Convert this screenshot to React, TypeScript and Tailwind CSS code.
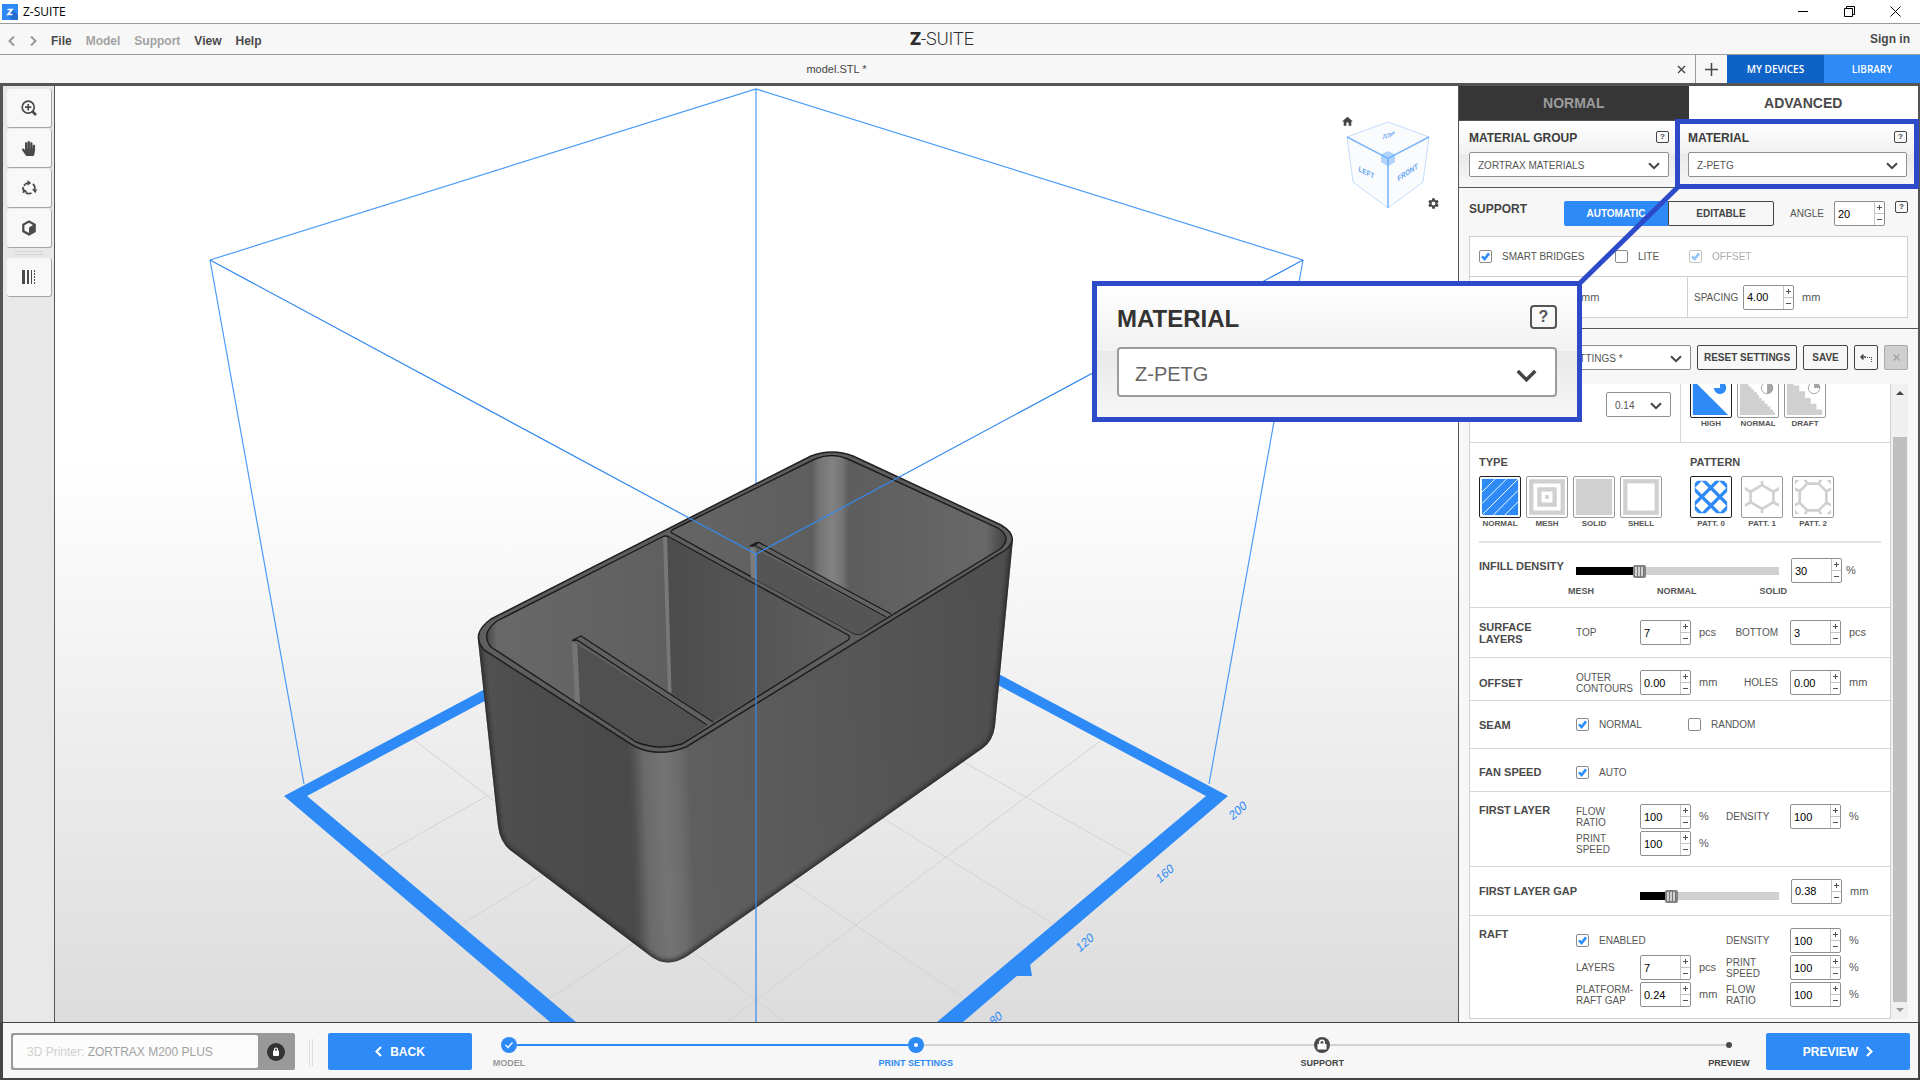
import React from "react";
import { FaHandPaper } from "react-icons/fa";
import { MdHome, MdSettings } from "react-icons/md";

interface SpinProps {
  label: string;
  value: string;
}

const Chevron = ({ className }: { className: string }) => (
  <svg viewBox="0 0 12 8" fill="none" stroke="#444" strokeWidth="2" className={className}>
    <path d="M1 1.2 6 6.2 11 1.2" />
  </svg>
);

const Spin = ({ label, value }: SpinProps) => (
  <span className="flex h-[25px] w-[51px] shrink-0 rounded-xs border border-[#8f8f8f] bg-white">
    <input
      aria-label={label}
      defaultValue={value}
      className="w-[39px] min-w-0 pt-px pl-[3px] text-[11px] text-black outline-none"
    />
    <span className="flex w-2.5 flex-col border-l border-[#c4c4c4]">
      <button aria-label={`Increase ${label}`} className="flex flex-1 items-center justify-center border-b border-[#c4c4c4]">
        <svg width="5" height="5" stroke="#555" className="block">
          <path d="M0 2.5H5M2.5 0V5" />
        </svg>
      </button>
      <button aria-label={`Decrease ${label}`} className="flex flex-1 items-center justify-center">
        <svg width="5" height="5" stroke="#555" className="block">
          <path d="M0 2.5H5" />
        </svg>
      </button>
    </span>
  </span>
);

interface CheckProps {
  label: string;
  checked?: boolean;
  disabled?: boolean;
  className?: string;
}

const Check = ({ label, checked, disabled, className = "" }: CheckProps) => (
  <label className={`flex items-center gap-2.5 text-[10px] ${disabled ? "opacity-50" : ""} ${className}`}>
    <span className="relative block size-[13px] shrink-0">
      <input
        type="checkbox"
        defaultChecked={checked}
        disabled={disabled}
        className="peer block size-[13px] appearance-none rounded-xs border border-[#8a8a8a] bg-white"
      />
      <svg
        viewBox="0 0 13 13"
        fill="none"
        stroke="#2d8af7"
        strokeWidth="2.6"
        className="pointer-events-none absolute inset-0 hidden peer-checked:block"
      >
        <path d="M3 6.4 5.6 9 10 3.4" />
      </svg>
    </span>
    {label}
  </label>
);

const Help = () => (
  <button className="flex h-3 w-[13px] items-center justify-center rounded-xs border border-[#444] text-[8px] leading-none font-bold text-[#444]">
    ?
  </button>
);

interface SelectProps {
  label: string;
  value: string;
  className?: string;
}

const Select = ({ label, value, className = "pl-2" }: SelectProps) => (
  <span className="relative block w-full">
    <select
      aria-label={label}
      className={`block h-[25px] w-full appearance-none rounded-xs border border-[#8f8f8f] bg-white pt-px text-[10px] font-normal text-[#555] ${className}`}
    >
      <option>{value}</option>
    </select>
    <Chevron className="pointer-events-none absolute top-[10px] right-[9px] h-2 w-3" />
  </span>
);

interface SliderProps {
  label: string;
  value: number;
}

const Slider = ({ label, value }: SliderProps) => (
  <input
    type="range"
    aria-label={label}
    defaultValue={value}
    style={{ backgroundImage: `linear-gradient(to right, #000 ${value}%, #d0d0d0 ${value}%)` }}
    className="block h-2 w-full appearance-none [&::-webkit-slider-thumb]:h-[13px] [&::-webkit-slider-thumb]:w-[13px] [&::-webkit-slider-thumb]:appearance-none [&::-webkit-slider-thumb]:rounded-xs [&::-webkit-slider-thumb]:border-2 [&::-webkit-slider-thumb]:border-[#828282] [&::-webkit-slider-thumb]:bg-[repeating-linear-gradient(to_right,#d0d0d0_0_2px,#777_2px_3px)]"
  />
);

interface TileProps {
  label: string;
  active?: boolean;
  children: React.ReactNode;
}

const Tile = ({ label, active, children }: TileProps) => (
  <button className="flex w-[42px] flex-col items-center">
    <svg
      viewBox="0 0 42 42"
      className={`block size-[42px] rounded-xs border bg-white ${active ? "border-[#222] text-[#2d8af7]" : "border-[#9a9a9a] text-[#d0d0d0]"}`}
    >
      {children}
    </svg>
    <span className="text-[8px] leading-3 font-bold whitespace-nowrap">{label}</span>
  </button>
);

const Unit = ({ children }: { children: React.ReactNode }) => (
  <span className="w-[35px] pl-2 text-[11px]">{children}</span>
);

const Sub = ({ children }: { children: React.ReactNode }) => (
  <span className="w-16 text-[10px] leading-[11px] whitespace-pre-line">{children}</span>
);

const SubRight = ({ children }: { children: React.ReactNode }) => (
  <span className="w-16 pr-3 text-right text-[10px]">{children}</span>
);

const Heading = ({ children }: { children: React.ReactNode }) => (
  <h3 className="w-[97px] shrink-0 text-[11px] leading-3 font-bold whitespace-pre-line text-[#4a4a4a]">{children}</h3>
);

const TitleBar = () => (
  <header className="flex h-6 shrink-0 items-center border-b border-[#9b9b9b] bg-white pl-0.5">
    <svg width="16" height="16" className="mr-[5px]">
      <rect width="16" height="16" fill="#2d8af7" />
      <path d="M10 5 16 11V16H10L6 11Z" fill="#226fd0" />
      <path d="M5.5 5.5H10L6 10.5H10.5" fill="none" stroke="#fff" strokeWidth="1.7" />
    </svg>
    <h1 className="flex-1 font-['Open_Sans',sans-serif] text-xs text-black">Z-SUITE</h1>
    <button aria-label="Minimize" className="flex w-[46px] justify-center">
      <svg width="11" height="11" stroke="#000">
        <path d="M0 5.5H10" />
      </svg>
    </button>
    <button aria-label="Restore" className="flex w-[46px] justify-center">
      <svg width="11" height="11" fill="none" stroke="#000">
        <path d="M.5 2.5H8.5V10.5H.5ZM2.5 2.5V.5H10.5V8.5H8.5" />
      </svg>
    </button>
    <button aria-label="Close" className="mr-0.5 flex w-[46px] justify-center">
      <svg width="11" height="11" stroke="#000">
        <path d="M.5.5 10.5 10.5M10.5.5.5 10.5" />
      </svg>
    </button>
  </header>
);

const MenuBar = () => (
  <nav className="grid h-[31px] shrink-0 grid-cols-3 items-center border-b border-[#9b9b9b] bg-[#f7f7f7] text-xs font-bold text-[#4a4a4a]">
    <div className="flex items-center gap-3.5 pt-[3px] pl-2">
      <div className="flex gap-[15px]">
        <button aria-label="Undo">
          <svg width="7" height="10" fill="none" stroke="#999" strokeWidth="2">
            <path d="M6 .5 1.5 5 6 9.5" />
          </svg>
        </button>
        <button aria-label="Redo">
          <svg width="7" height="10" fill="none" stroke="#999" strokeWidth="2">
            <path d="M1 .5 5.5 5 1 9.5" />
          </svg>
        </button>
      </div>
      <button>File</button>
      <button className="text-[#a2a2a2]">Model</button>
      <button className="text-[#a2a2a2]">Support</button>
      <button>View</button>
      <button>Help</button>
    </div>
    <div className="pr-9 text-center font-[Roboto,sans-serif] text-lg leading-6 font-light text-[#2e2e2e]">
      <span className="font-black">Z</span>-SUITE
    </div>
    <a href="#" className="pr-2.5 text-right">
      Sign in
    </a>
  </nav>
);

const TabBar = () => (
  <div className="flex h-7 shrink-0 bg-[#f7f7f7]">
    <div className="flex flex-1 items-center pr-[9px] text-[11px] text-[#444]">
      <span className="flex-1 pr-1 text-center">model.STL *</span>
      <button aria-label="Close tab">
        <svg width="9" height="9" stroke="#444" strokeWidth="1.4">
          <path d="M1 1 8 8M8 1 1 8" />
        </svg>
      </button>
    </div>
    <button aria-label="New tab" className="flex w-8 items-center justify-center border-l border-[#9b9b9b]">
      <svg width="13" height="13" stroke="#444" strokeWidth="1.5">
        <path d="M0 6.5H13M6.5 0V13" />
      </svg>
    </button>
    <button className="w-[97px] bg-[#0f62c6] font-['Open_Sans',sans-serif] text-[10px] font-semibold text-white">MY DEVICES</button>
    <button className="w-24 bg-[#2d8af7] font-['Open_Sans',sans-serif] text-[10px] font-semibold text-white">LIBRARY</button>
  </div>
);

const ToolButton = ({ label, children }: { label: string; children: React.ReactNode }) => (
  <button
    aria-label={label}
    className="flex h-[39px] w-[45px] items-center justify-center rounded-[3px] border-r border-b border-[#a4a4a4] bg-[#f8f8f8] text-[#4a4a4a]"
  >
    {children}
  </button>
);

const Toolbar = () => (
  <aside className="flex w-[52px] shrink-0 flex-col items-center gap-px border-r border-[#555] bg-[#e8e8e8] pt-[3px] pl-px">
    <ToolButton label="Zoom">
      <svg width="16" height="16" viewBox="0 0 16 16" fill="none" stroke="currentColor" strokeWidth="1.7">
        <circle cx="7.2" cy="7.2" r="6" />
        <path d="M4 7.2H10.4M7.2 4V10.4" />
        <path d="M11.5 11.5 15 15" strokeWidth="2.6" />
      </svg>
    </ToolButton>
    <ToolButton label="Pan">
      <FaHandPaper size={15} />
    </ToolButton>
    <ToolButton label="Rotate">
      <svg width="16" height="16" viewBox="0 0 16 16" fill="none" stroke="currentColor" strokeWidth="1.8">
        <path d="M3 5.8A5.6 5.6 0 0 1 7 2.8M12 3.8A5.6 5.6 0 0 1 13.5 9.5M10.5 13A5.6 5.6 0 0 1 4.6 12.5" />
        <path d="M6.5 0V5.8L10.2 2.9ZM10.8 9.2H16L14.5 13.2ZM1.6 13.3 2 8.5 6.4 11.2Z" fill="currentColor" stroke="none" />
        <path d="M2.1 10A6 6 0 0 1 2.3 7" />
      </svg>
    </ToolButton>
    <ToolButton label="View">
      <svg width="16" height="16" viewBox="0 0 16 16">
        <path d="M8 .3 14.8 4.1V11.9L8 15.7 1.2 11.9V4.1Z" fill="currentColor" />
        <path d="M8 2.8 12 5 8 7.6V13L3.4 10.6V5.3Z" fill="#f8f8f8" />
      </svg>
    </ToolButton>
    <div className="my-0.5 h-1 w-7 border-y border-[#d0d4d8]" />
    <ToolButton label="Supports">
      <svg width="14" height="14" stroke="currentColor">
        <path d="M1.5 0V14" strokeWidth="3" />
        <path d="M6 0V14" strokeWidth="2" />
        <path d="M9.5 0V14" />
        <path d="M12.5 0V14" strokeDasharray="2 1" />
      </svg>
    </ToolButton>
  </aside>
);

const ViewCube = () => (
  <div className="absolute top-6 right-3 size-[110px]">
    <svg viewBox="1336 110 110 110" className="block size-full">
      <g fill="#fafbfd" stroke="#c3defc">
        <path d="M1388 122 1429 137 1388 158.500 1347 137Z" />
        <path d="M1347 137 1388 158.500V208L1353 182Z" />
        <path d="M1429 137 1388 158.500V208L1423 182Z" />
      </g>
      <path d="M1347 137 1388 158.500 1429 137M1388 158.500V208" fill="none" stroke="#7fb8fa" strokeWidth="1.5" />
      <path d="M1388 151 1395 154.500V162L1388 166.500 1381 162V154.500Z" fill="#6aaefa" opacity=".5" />
      <g fill="#62a5f3" fontFamily="Liberation Sans, sans-serif" fontSize="7" fontWeight="700" textAnchor="middle">
        <text transform="translate(1366 175) rotate(28) skewX(20)">LEFT</text>
        <text transform="translate(1408 175) rotate(-34) skewX(-26)">FRONT</text>
        <text transform="translate(1387 138) rotate(-16) skewX(-42)" fontSize="6">TOP</text>
      </g>
    </svg>
    <button aria-label="Home view" className="absolute top-[5px] left-[5px] text-[#444]">
      <MdHome size={13} />
    </button>
    <button aria-label="View options" className="absolute right-1.5 bottom-2.5 text-[#444]">
      <MdSettings size={13} />
    </button>
  </div>
);

const Scene = () => (
  <svg viewBox="55 86 1403 936" preserveAspectRatio="xMidYMid slice" className="absolute inset-0 block size-full">
    <defs>
      <linearGradient id="body" gradientUnits="userSpaceOnUse" x1="478" x2="1013" y1="0" y2="0" gradientTransform="translate(-30 0) skewX(2.24)">
        <stop offset="0" stopColor="#535353" />
        <stop offset=".08" stopColor="#4d4d4d" />
        <stop offset=".28" stopColor="#494949" />
        <stop offset=".29" stopColor="#505050" />
        <stop offset=".31" stopColor="#6a6a6a" />
        <stop offset=".345" stopColor="#747474" />
        <stop offset=".375" stopColor="#6c6c6c" />
        <stop offset=".395" stopColor="#5f5f5f" />
        <stop offset=".7" stopColor="#575757" />
        <stop offset="1" stopColor="#4e4e4e" />
      </linearGradient>
      <linearGradient id="back" gradientUnits="userSpaceOnUse" x1="672" x2="1006" y1="0" y2="0">
        <stop offset="0" stopColor="#656565" />
        <stop offset=".42" stopColor="#5e5e5e" />
        <stop offset=".44" stopColor="#747474" />
        <stop offset=".48" stopColor="#828282" />
        <stop offset=".51" stopColor="#747474" />
        <stop offset=".53" stopColor="#5d5d5d" />
        <stop offset=".94" stopColor="#686868" />
        <stop offset="1" stopColor="#424242" />
      </linearGradient>
      <linearGradient id="front" gradientUnits="userSpaceOnUse" x1="486" x2="668" y1="0" y2="0">
        <stop offset="0" stopColor="#444" />
        <stop offset=".06" stopColor="#686868" />
        <stop offset="1" stopColor="#5f5f5f" />
      </linearGradient>
      <linearGradient id="divider" gradientUnits="userSpaceOnUse" x1="668" x2="850" y1="0" y2="0">
        <stop offset="0" stopColor="#4c4c4c" />
        <stop offset="1" stopColor="#5f5f5f" />
      </linearGradient>
      <clipPath id="bodyClip">
        <path d="M478 640 498 826Q500 842 510 850L649 955Q667 970 689 955L983 748Q993 741 995 726L1013 539 850 456 658 600Z" />
      </clipPath>
      <filter id="soft">
        <feGaussianBlur stdDeviation="2" />
      </filter>
    </defs>

    <g fill="none" stroke="#d3d3d3">
      <path d="M1004 688 980 706M1103 739 727 1022M413 739 785 1022M379 857 487 796M462 924 560 864M550 998 660 926" />
      <path d="M1133 857 940 749M1053 924 860 804M964 998 770 868" />
    </g>
    <path d="M284 796 756 545 1228 796 963 1022H937L1206 796 756 556 307 796 576 1022H550Z" fill="#2d8af7" />
    <path d="M1030 964 1032 976H1014Z" fill="#2d8af7" />
    <g fill="#2d8af7" fontFamily="Liberation Sans, sans-serif" fontSize="12" textAnchor="middle">
      <text transform="translate(1240 814) rotate(-42) skewX(-12)">200</text>
      <text transform="translate(1167 877) rotate(-42) skewX(-12)">160</text>
      <text transform="translate(1087 946) rotate(-42) skewX(-12)">120</text>
      <text transform="translate(998 1022) rotate(-42) skewX(-12)">80</text>
    </g>
    <g fill="none" stroke="#4b9bf8" strokeWidth="1.2">
      <path d="M210 260 756 89 1303 260M756 89V500M210 260 304 784M1303 260 1209 784" />
    </g>

    <path
      d="M478 640 498 826Q500 842 510 850L649 955Q667 970 689 955L983 748Q993 741 995 726L1013 539 850 456 658 600Z"
      fill="url(#body)"
    />
    <g clipPath="url(#bodyClip)">
      <path
        d="M478 640 498 826Q500 842 510 850L649 955Q667 970 689 955L983 748Q993 741 995 726L1013 539"
        fill="none"
        stroke="#222"
        strokeWidth="4"
        filter="url(#soft)"
      />
    </g>
    <path
      d="M491 619 811 456Q832 448 853 456L1001 525Q1022 538 1004 551L686 747Q658 758 634 746L484 650Q470 634 491 619Z"
      fill="#5e5e5e"
      stroke="#1f1f1f"
      strokeWidth="1.5"
    />

    <path
      d="M672 533Q670 531 674 529L815 459Q832 452 848 459L998 528Q1013 538 1000 549L861 634Q857 635 853 633Z"
      fill="url(#back)"
      stroke="#1c1c1c"
      strokeWidth="1.4"
    />
    <path d="M756 546 888 616 861 634Q857 635 853 633L751 577Z" fill="#555" />
    <path d="M750 547H756L757 580 751 577Z" fill="#7c7c7c" />
    <path d="M750 546 759 542 891 614 885 618Z" fill="#636363" />
    <path d="M750 546 753 546 759 542.500M750 546 756 543 759 542.500 891 614M754 545 886 617" fill="none" stroke="#1c1c1c" strokeWidth="1.3" />

    <path
      d="M497 621 662 537Q666 535 669 537L848 635Q851 637 848 640L682 744Q658 751 636 742L491 647Q480 634 497 621Z"
      fill="url(#front)"
    />
    <path d="M667 537 848 635Q851 637 848 640L713 722 671 693Z" fill="url(#divider)" />
    <path d="M663 537H667L671.500 693 668 691Z" fill="#787878" />
    <path d="M577 641 708 725 682 744Q658 751 636 742L580 706Z" fill="#505050" />
    <path d="M572 641H577L580 705 575 702Z" fill="#757575" />
    <path d="M572 641 581 636 713 722 707 726Z" fill="#606060" />
    <path d="M572 640.500 581 636 713 722M572 640.500 577 640 707 725" fill="none" stroke="#1c1c1c" strokeWidth="1.3" />
    <path
      d="M497 621 662 537Q666 535 669 537L848 635Q851 637 848 640L682 744Q658 751 636 742L491 647Q480 634 497 621Z"
      fill="none"
      stroke="#1c1c1c"
      strokeWidth="1.4"
    />

    <path d="M210 260 756 554 1303 260M756 554V1022" fill="none" stroke="#3489ee" strokeWidth="1.2" />
  </svg>
);

const MaterialHeader = () => (
  <section className="flex h-[67px] shrink-0 border-b border-[#555] bg-[linear-gradient(#fff,#f1f1f1_50%,#e9e9e9_50%,#f7f7f7)]">
    <div className="w-[219px] pt-[9px] pr-[9px] pl-2.5">
      <div className="flex h-[22px] items-start justify-between">
        <h2 className="text-xs leading-4 font-bold text-[#3c3c3c]">MATERIAL GROUP</h2>
        <span className="pt-px">
          <Help />
        </span>
      </div>
      <Select label="Material group" value="ZORTRAX MATERIALS" />
    </div>
    <div className="relative flex-1 pt-[9px] pr-[11px] pl-2.5">
      <div className="flex h-[22px] items-start justify-between">
        <h2 className="text-xs leading-4 font-bold text-[#3c3c3c]">MATERIAL</h2>
        <span className="pt-px">
          <Help />
        </span>
      </div>
      <Select label="Material" value="Z-PETG" />
      <div className="pointer-events-none absolute -top-0.5 -right-px -bottom-0.5 -left-[3px] border-[5px] border-[#2d4bc8]" />
    </div>
  </section>
);

const SupportSection = () => (
  <section className="shrink-0 border-b border-[#555] bg-[#f7f7f7] pt-[13px] pr-2.5 pb-2.5 pl-2.5 text-[#555]">
    <div className="flex items-start">
      <h2 className="w-[95px] text-xs leading-4 font-bold text-[#444]">SUPPORT</h2>
      <div className="flex h-[25px] w-[210px] text-[10px] font-bold">
        <button className="flex-1 rounded-l-xs bg-[#2d8af7] text-white">AUTOMATIC</button>
        <button className="flex-1 rounded-r-xs border border-[#444] text-[#444]">EDITABLE</button>
      </div>
      <span className="ml-4 flex h-[25px] w-11 items-center text-[10px]">ANGLE</span>
      <Spin label="Angle" value="20" />
      <span className="ml-auto">
        <Help />
      </span>
    </div>
    <div className="mt-2.5 border border-[#d0d0d0] bg-white">
      <div className="flex h-10 items-center border-b border-[#d0d0d0] pl-[9px]">
        <Check label="SMART BRIDGES" checked className="w-[136px]" />
        <Check label="LITE" className="w-[74px]" />
        <Check label="OFFSET" checked disabled />
      </div>
      <div className="flex h-10">
        <div className="flex w-[218px] items-center border-r border-[#d0d0d0] pl-[111px] text-[11px]">mm</div>
        <div className="flex items-center pl-1.5">
          <span className="w-[49px] text-[10px]">SPACING</span>
          <Spin label="Spacing" value="4.00" />
          <Unit>mm</Unit>
        </div>
      </div>
    </div>
  </section>
);

const SettingsBar = () => (
  <div className="flex shrink-0 items-center gap-1.5 bg-[#f7f7f7] pt-4 pr-2.5 pb-3.5 pl-2.5 text-[10px] font-bold text-[#444]">
    <Select label="Profile" value="SETTINGS *" className="pl-24" />
    <button className="h-[25px] w-[100px] shrink-0 rounded-xs border border-[#444]">RESET SETTINGS</button>
    <button className="h-[25px] w-[45px] shrink-0 rounded-xs border border-[#444]">SAVE</button>
    <button aria-label="Revert" className="flex h-[25px] w-6 shrink-0 items-center justify-center rounded-xs border border-[#444]">
      <svg width="13" height="9" fill="none" stroke="#444">
        <path d="M3.500 1.500 1 4 3.500 6.500M1 4H6" strokeWidth="1.5" />
        <path d="M7 4.500H12M11.500 4V9" strokeDasharray="1 1" />
      </svg>
    </button>
    <button aria-label="Delete" className="flex h-[25px] w-6 shrink-0 items-center justify-center rounded-xs border border-[#aaa] bg-[#cfcfcf]">
      <svg width="7" height="7" stroke="#a5a5a5" strokeWidth="1.5">
        <path d="M.5.5 6.500 6.500M6.500.5.5 6.500" />
      </svg>
    </button>
  </div>
);

const QualityRow = () => (
  <div className="flex h-[59px] border-b border-[#d6d6d6]">
    <div className="w-[211px] border-r border-[#d6d6d6] pt-2 pr-[9px]">
      <div className="ml-auto w-[65px]">
        <Select label="Layer thickness" value="0.14" />
      </div>
    </div>
    <div className="-mt-2 flex gap-[5px] pl-[9px]">
      <Tile label="HIGH" active>
        <path d="M2 3 39 40H2Z" fill="currentColor" />
        <path d="M30.500 11.500V5A6.500 6.500 0 1 1 24 11.500Z" fill="currentColor" />
      </Tile>
      <Tile label="NORMAL">
        <path d="M2 2H7V7H11V10H14V13H17V16H20V19H22V22H25V25H28V28H31V31H34V34H37V37H39V40H2Z" fill="currentColor" />
        <circle cx="30.500" cy="11.500" r="6" fill="#fff" stroke="#a5a5a5" />
        <path d="M30.500 5A6.500 6.500 0 0 1 30.500 18Z" fill="#a5a5a5" />
      </Tile>
      <Tile label="DRAFT">
        <path d="M2 2H9V9H15V15H21V22H27V28H33V34H39V40H2Z" fill="currentColor" />
        <circle cx="30.500" cy="11.500" r="6" fill="#fff" stroke="#a5a5a5" />
        <path d="M30.500 5A6.500 6.500 0 0 1 37 11.500H30.500Z" fill="#a5a5a5" />
      </Tile>
    </div>
  </div>
);

const TypeRow = () => (
  <div className="mr-[9px] ml-[9px] flex border-b-2 border-[#e2e2e2] pt-[13px] pb-[11px]">
    <div className="w-[211px]">
      <h3 className="mb-2 text-[11px] leading-3 font-bold text-[#4a4a4a]">TYPE</h3>
      <div className="flex gap-[5px]">
        <Tile label="NORMAL" active>
          <rect x="2" y="2" width="38" height="38" fill="currentColor" />
          <path d="M2 16 16 2M2 28 28 2M2 40 40 2M14 40 40 14M26 40 40 26" stroke="#fff" />
        </Tile>
        <Tile label="MESH">
          <path d="M4.500 4.500H37.500V37.500H4.500ZM13 13H29V29H13Z" fill="none" stroke="currentColor" strokeWidth="4.500" />
          <rect x="19" y="19" width="4" height="4" fill="currentColor" />
        </Tile>
        <Tile label="SOLID">
          <rect x="2" y="2" width="38" height="38" fill="currentColor" />
        </Tile>
        <Tile label="SHELL">
          <rect x="4.500" y="4.500" width="33" height="33" fill="none" stroke="currentColor" strokeWidth="4.500" />
        </Tile>
      </div>
    </div>
    <div>
      <h3 className="mb-2 text-[11px] leading-3 font-bold text-[#4a4a4a]">PATTERN</h3>
      <div className="flex gap-[9px]">
        <Tile label="PATT. 0" active>
          <svg x="4" y="4" width="34" height="34" viewBox="0 0 34 34">
            <path
              d="M-2 26 26-2M7 36 36 7M-2 7.500 27 36M7.500-2 36 26.500M-1 6 6-1M27 35 35 27M27-1 35 7M-1 27 7 35"
              stroke="currentColor"
              strokeWidth="3.500"
            />
          </svg>
        </Tile>
        <Tile label="PATT. 1">
          <svg x="3" y="4" width="36" height="34" viewBox="0 0 36 34">
            <path
              d="M18 4.500 30 11.500V22.500L18 29.500 6 22.500V11.500ZM18 0V4.500M18 29.500V34M30 11.500 37 7.500M30 22.500 37 26.500M6 11.500-1 7.500M6 22.500-1 26.500"
              fill="none"
              stroke="currentColor"
              strokeWidth="2.800"
            />
          </svg>
        </Tile>
        <Tile label="PATT. 2">
          <svg x="2" y="3" width="38" height="36" viewBox="0 0 38 36">
            <path
              d="M13 4H25L33 12V24L25 32H13L5 24V12ZM13 4 10-1M25 4 28-1M33 12 39 9M33 24 39 27M25 32 28 37M13 32 10 37M5 12-1 9M5 24-1 27"
              fill="none"
              stroke="currentColor"
              strokeWidth="2.800"
            />
            <path d="M0 0H5L0 5ZM38 0H33L38 5ZM0 36H5L0 31ZM38 36H33L38 31Z" fill="currentColor" />
          </svg>
        </Tile>
      </div>
    </div>
  </div>
);

const rowClass = "flex border-b border-[#d6d6d6] pl-[9px]";

const SettingsList = () => (
  <div className="flex min-h-0 flex-1 bg-[#f7f7f7] pr-2.5 pb-[3px] pl-2.5">
    <div className="min-w-0 flex-1 overflow-hidden border-x border-b border-[#d0d0d0] bg-white text-[#555]">
      <QualityRow />
      <TypeRow />

      <div className={`${rowClass} h-[65px] pt-[15px]`}>
        <span className="pt-0.5">
          <Heading>INFILL DENSITY</Heading>
        </span>
        <div className="w-[203px] pt-[9px]">
          <Slider label="Infill density" value={30} />
          <div className="-mx-2 mt-2.5 flex justify-between text-[9px] leading-3 font-bold">
            <span>MESH</span>
            <span>NORMAL</span>
            <span>SOLID</span>
          </div>
        </div>
        <span className="w-3" />
        <Spin label="Infill density value" value="30" />
        <span className="pt-1 pl-1 text-[11px]">%</span>
      </div>

      <div className={`${rowClass} h-[50px] items-center`}>
        <Heading>{"SURFACE\nLAYERS"}</Heading>
        <Sub>TOP</Sub>
        <Spin label="Top layers" value="7" />
        <Unit>pcs</Unit>
        <SubRight>BOTTOM</SubRight>
        <Spin label="Bottom layers" value="3" />
        <Unit>pcs</Unit>
      </div>

      <div className={`${rowClass} h-[43px] items-end pb-[5px]`}>
        <div className="flex items-center">
          <Heading>OFFSET</Heading>
          <Sub>{"OUTER\nCONTOURS"}</Sub>
          <Spin label="Outer contours" value="0.00" />
          <Unit>mm</Unit>
          <SubRight>HOLES</SubRight>
          <Spin label="Holes" value="0.00" />
          <Unit>mm</Unit>
        </div>
      </div>

      <div className={`${rowClass} h-12 items-center`}>
        <Heading>SEAM</Heading>
        <Check label="NORMAL" checked className="w-28" />
        <Check label="RANDOM" />
      </div>

      <div className={`${rowClass} h-[43px] items-center pt-1`}>
        <Heading>FAN SPEED</Heading>
        <Check label="AUTO" checked />
      </div>

      <div className={`${rowClass} h-[75px] pt-3`}>
        <Heading>FIRST LAYER</Heading>
        <div className="flex flex-col gap-0.5">
          <div className="flex items-center">
            <Sub>{"FLOW\nRATIO"}</Sub>
            <Spin label="First layer flow ratio" value="100" />
            <Unit>%</Unit>
            <Sub>DENSITY</Sub>
            <Spin label="First layer density" value="100" />
            <Unit>%</Unit>
          </div>
          <div className="flex items-center">
            <Sub>{"PRINT\nSPEED"}</Sub>
            <Spin label="First layer print speed" value="100" />
            <Unit>%</Unit>
          </div>
        </div>
      </div>

      <div className={`${rowClass} h-[49px] items-center`}>
        <h3 className="w-[161px] text-[11px] leading-3 font-bold text-[#4a4a4a]">FIRST LAYER GAP</h3>
        <div className="w-[139px] pt-2.5">
          <Slider label="First layer gap" value={20} />
        </div>
        <span className="w-3" />
        <Spin label="First layer gap value" value="0.38" />
        <Unit>mm</Unit>
      </div>

      <div className="flex pt-3 pl-[9px]">
        <Heading>RAFT</Heading>
        <div className="flex flex-col gap-0.5">
          <div className="flex items-center">
            <Check label="ENABLED" checked className="w-[150px]" />
            <Sub>DENSITY</Sub>
            <Spin label="Raft density" value="100" />
            <Unit>%</Unit>
          </div>
          <div className="flex items-center">
            <Sub>LAYERS</Sub>
            <Spin label="Raft layers" value="7" />
            <Unit>pcs</Unit>
            <Sub>{"PRINT\nSPEED"}</Sub>
            <Spin label="Raft print speed" value="100" />
            <Unit>%</Unit>
          </div>
          <div className="flex items-center">
            <Sub>{"PLATFORM-\nRAFT GAP"}</Sub>
            <Spin label="Platform-raft gap" value="0.24" />
            <Unit>mm</Unit>
            <Sub>{"FLOW\nRATIO"}</Sub>
            <Spin label="Raft flow ratio" value="100" />
            <Unit>%</Unit>
          </div>
        </div>
      </div>
    </div>
    <div className="flex w-[17px] flex-col items-center bg-[#f0f0f0] pr-px pl-0.5">
      <svg width="8" height="20" className="block shrink-0">
        <path d="M0 11 4 7 8 11Z" fill="#444" />
      </svg>
      <div className="mt-[33px] w-full flex-1 bg-[#bfbfbf]" />
      <svg width="8" height="17" className="block shrink-0">
        <path d="M0 6H8L4 10Z" fill="#999" />
      </svg>
    </div>
  </div>
);

const SettingsPanel = () => (
  <aside className="flex w-[462px] shrink-0 flex-col border-r-2 border-l border-[#555]">
    <div className="flex h-[35px] shrink-0 border-b border-[#555] text-sm font-bold">
      <button className="flex-1 bg-[#363636] text-[#9c9c9c]">NORMAL</button>
      <button className="flex-1 bg-white text-[#4a4a4a]">ADVANCED</button>
    </div>
    <MaterialHeader />
    <SupportSection />
    <SettingsBar />
    <SettingsList />
  </aside>
);

const Callout = () => (
  <>
    <svg width="106" height="104" className="absolute top-[98px] right-[238px]">
      <path d="M102 3 4 99" stroke="#2d4bc8" strokeWidth="5" />
    </svg>
    <div className="absolute top-[195px] right-[338px] w-[490px] border-[5px] border-[#2d4bc8] bg-[linear-gradient(#fff,#f1f1f1_50%,#e9e9e9_50%,#f6f6f6)] px-5 pt-[19px] pb-5">
      <div className="flex h-[42px] justify-between">
        <h2 className="text-2xl leading-7 font-bold text-[#333]">MATERIAL</h2>
        <button className="flex h-6 w-[27px] items-center justify-center rounded-sm border-2 border-[#555] text-base leading-none font-bold text-[#555]">
          ?
        </button>
      </div>
      <div className="relative">
        <select
          aria-label="Selected material"
          className="block h-[50px] w-full appearance-none rounded-sm border-2 border-[#9b9b9b] bg-white pt-1 pl-4 text-xl text-[#666]"
        >
          <option>Z-PETG</option>
        </select>
        <Chevron className="pointer-events-none absolute top-[22px] right-5 h-[14px] w-[21px]" />
      </div>
    </div>
  </>
);

const StepLabel = ({ children, className = "text-[#444]" }: { children: React.ReactNode; className?: string }) => (
  <span className={`mt-1 text-[9px] leading-3 font-bold whitespace-nowrap ${className}`}>{children}</span>
);

const BottomBar = () => (
  <footer className="flex h-[58px] shrink-0 items-start border-t border-r-2 border-b-2 border-l-[3px] border-[#444] bg-[#f7f7f7] px-2 pt-2.5">
    <div className="flex h-[37px] w-[284px] items-center rounded-xs border-2 border-[#999] bg-[#999] text-xs">
      <span className="flex h-full w-[245px] items-center rounded-xs bg-[#fcfcfc] pl-3.5 text-[#a2a2a2]">
        <span className="text-[#cfcfcf]">3D Printer:</span>&nbsp;ZORTRAX M200 PLUS
      </span>
      <button aria-label="Lock printer" className="ml-[9px]">
        <svg width="18" height="18" className="block">
          <circle cx="9" cy="9" r="9" fill="#333" />
          <rect x="6" y="7.500" width="6" height="5.500" rx="1" fill="#fff" />
          <path d="M7.500 8V6.500A1.500 1.500 0 0 1 10.500 6.500V8" fill="none" stroke="#fff" strokeWidth="1.200" />
        </svg>
      </button>
    </div>
    <div className="mr-[15px] ml-[14px] mt-1.5 h-[27px] w-1 border-x border-[#dcdfe2]" />
    <button className="flex h-[37px] w-36 items-center justify-center gap-2 rounded-xs bg-[#2d8af7] text-xs font-bold text-white">
      <svg width="7" height="11" fill="none" stroke="#fff" strokeWidth="2.200">
        <path d="M6 1 1.500 5.500 6 10" />
      </svg>
      BACK
    </button>
    <div className="mx-[29px] flex flex-1 items-start pt-1">
      <div className="flex w-4 flex-col items-center">
        <svg width="16" height="16" className="block">
          <circle cx="8" cy="8" r="8" fill="#2d8af7" />
          <path d="M4.500 8 7 10.500 11.500 5.500" fill="none" stroke="#fff" strokeWidth="1.300" />
        </svg>
        <StepLabel className="text-[#999]">MODEL</StepLabel>
      </div>
      <div className="mt-[7px] h-0.5 flex-1 bg-[#2d8af7]" />
      <div className="flex w-4 flex-col items-center">
        <svg width="16" height="16" className="block">
          <circle cx="8" cy="8" r="8" fill="#2d8af7" />
          <circle cx="8" cy="8" r="2" fill="#fff" />
        </svg>
        <StepLabel className="text-[#2d8af7]">PRINT SETTINGS</StepLabel>
      </div>
      <div className="mt-[7px] h-0.5 flex-1 bg-[#d2d2d2]" />
      <div className="flex w-4 flex-col items-center">
        <svg width="16" height="16" className="block">
          <circle cx="8" cy="8" r="8" fill="#4a4a4a" />
          <path d="M3.500 7H12.500V12.500H3.500ZM5 7V5.500A3 3 0 0 1 11 5.500V7Z" fill="#fff" />
          <path d="M6.500 6.500V5.500A1.500 1.500 0 0 1 9.500 5.500V6.500Z" fill="#4a4a4a" />
        </svg>
        <StepLabel>SUPPORT</StepLabel>
      </div>
      <div className="mt-[7px] h-0.5 flex-1 bg-[#d2d2d2]" />
      <div className="flex w-4 flex-col items-center">
        <svg width="16" height="16" className="block">
          <path d="M0 8H8" stroke="#d2d2d2" strokeWidth="2" />
          <circle cx="8" cy="8" r="3" fill="#4a4a4a" />
        </svg>
        <StepLabel>PREVIEW</StepLabel>
      </div>
    </div>
    <button className="flex h-[37px] w-36 items-center justify-center gap-2 rounded-xs bg-[#2d8af7] text-xs font-bold text-white">
      PREVIEW
      <svg width="7" height="11" fill="none" stroke="#fff" strokeWidth="2.200">
        <path d="M1 1 5.500 5.500 1 10" />
      </svg>
    </button>
  </footer>
);

const App = () => {
  return (
    <div className="flex h-screen flex-col overflow-hidden bg-white font-['Liberation_Sans',Arial,sans-serif]">
      <TitleBar />
      <MenuBar />
      <TabBar />
      <main className="relative flex min-h-0 flex-1 border-t-[3px] border-l-[3px] border-[#555]">
        <Toolbar />
        <div className="relative min-w-0 flex-1 bg-linear-to-b from-white from-40% to-[#dcdcdc]">
          <Scene />
          <ViewCube />
        </div>
        <SettingsPanel />
        <Callout />
      </main>
      <BottomBar />
    </div>
  );
};

export default App;
